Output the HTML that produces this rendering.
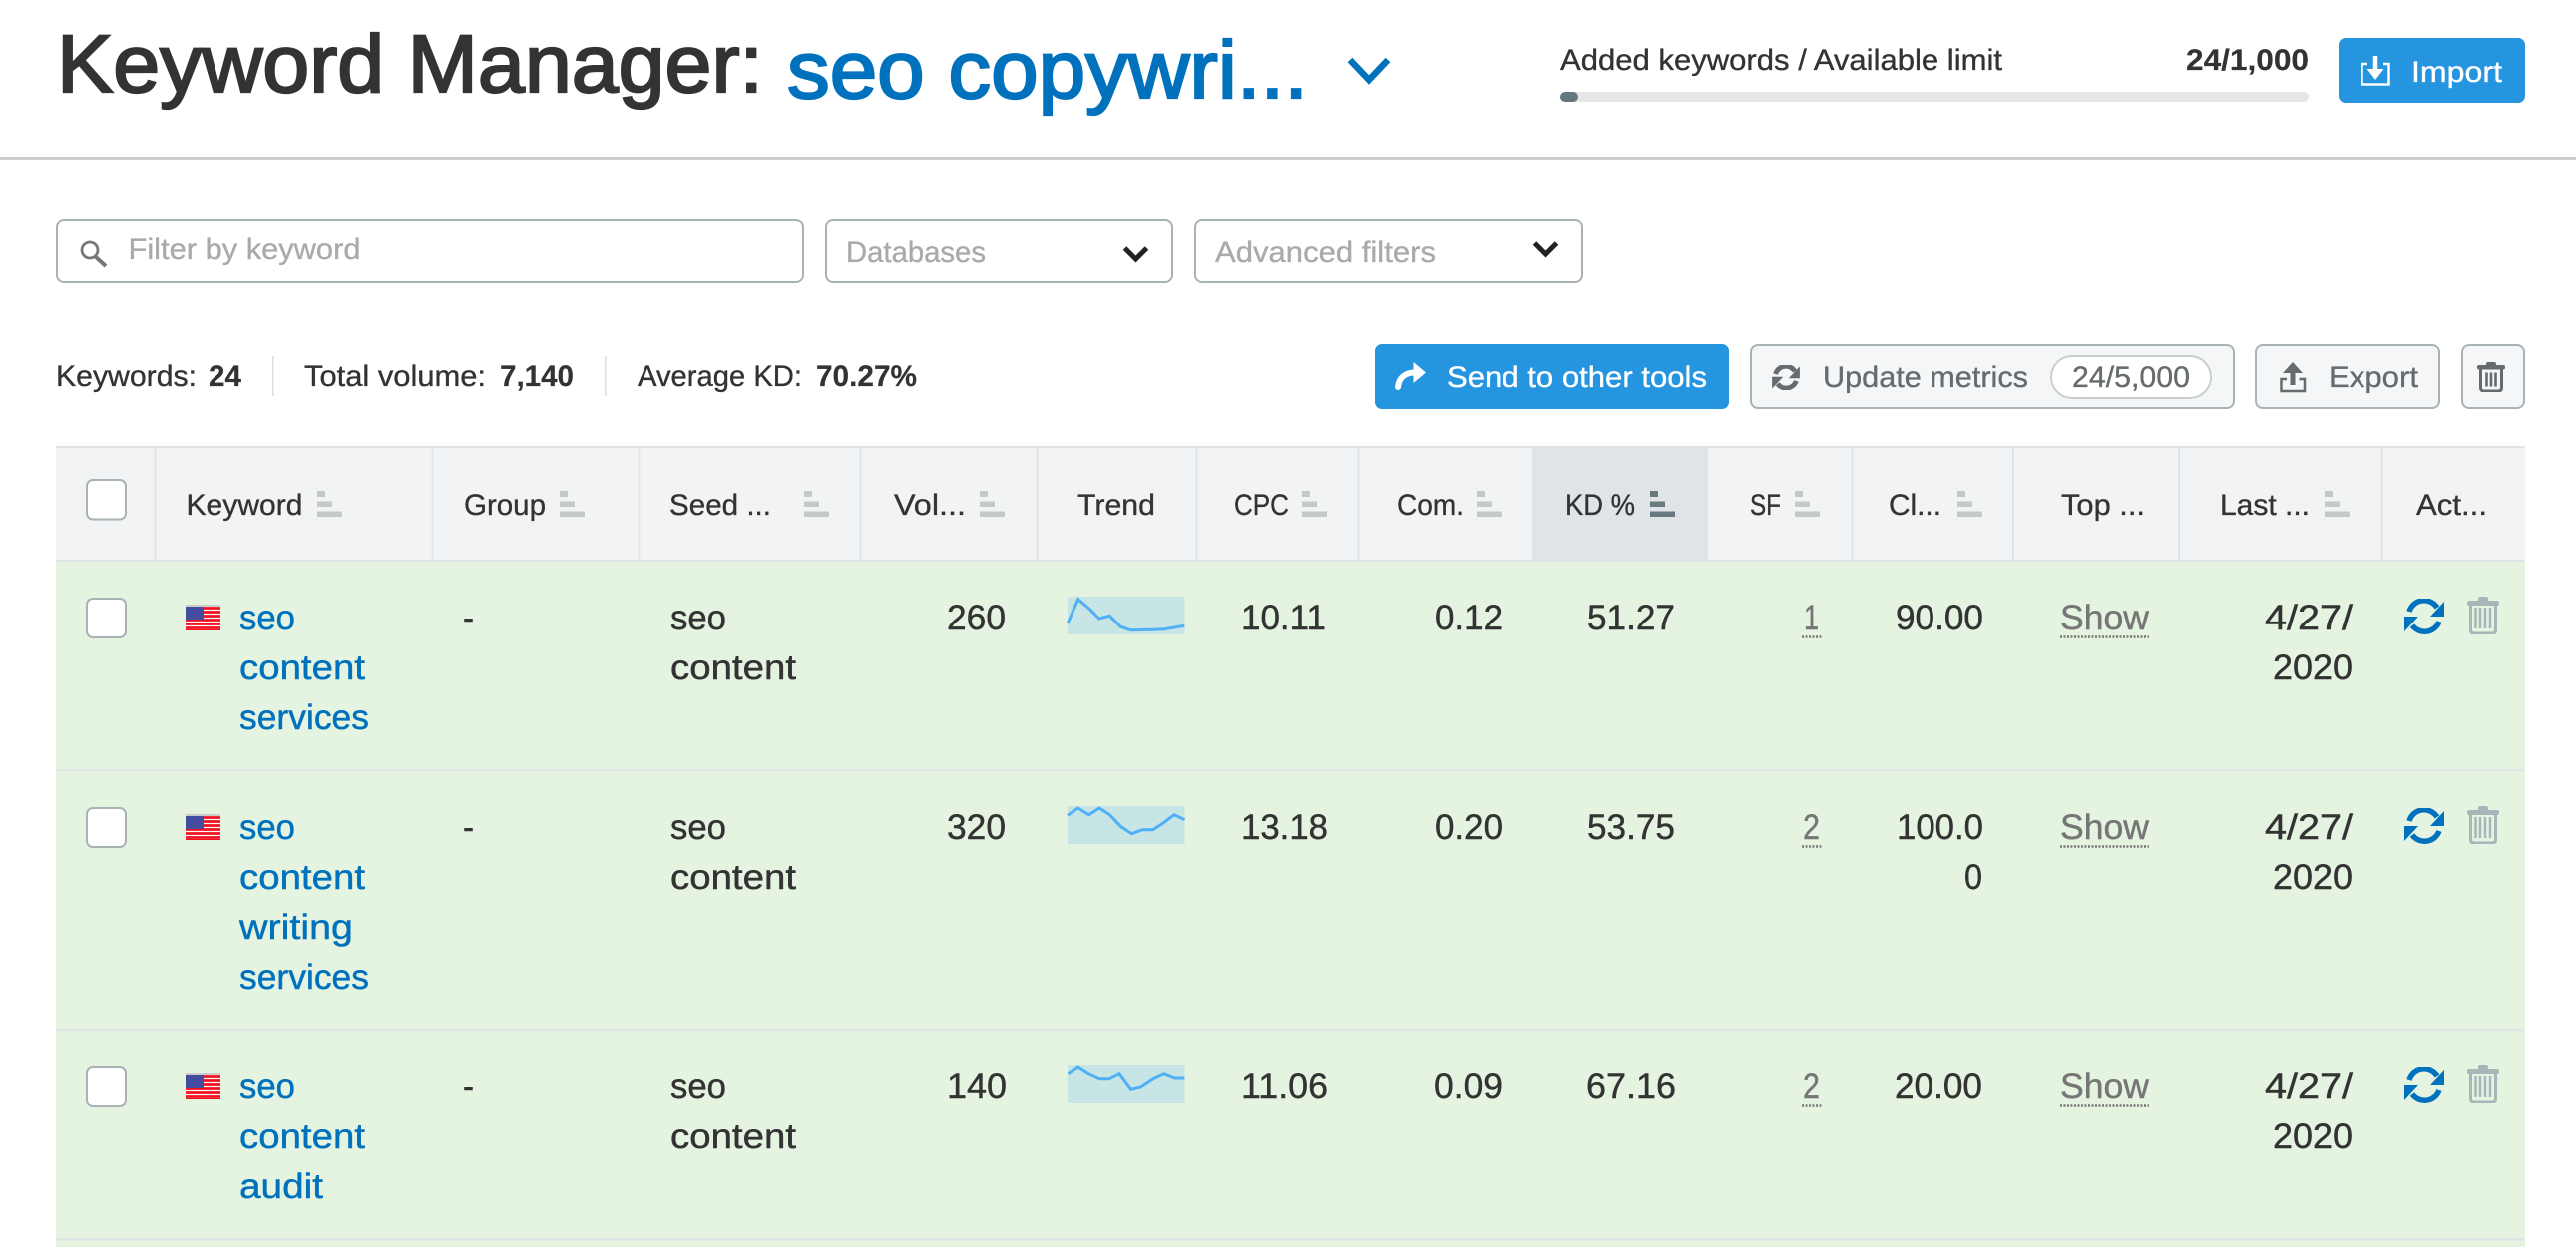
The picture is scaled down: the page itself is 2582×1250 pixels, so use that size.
<!DOCTYPE html>
<html lang="en">
<head>
<meta charset="utf-8">
<title>Keyword Manager</title>
<style>
html,body{margin:0;padding:0;background:#fff;width:2582px;height:1250px;overflow:hidden}
svg{display:block}
text{font-family:"Liberation Sans",Arial,sans-serif;fill:#333;stroke:#333;stroke-width:.45;font-size:35px}
.h{font-size:30px;stroke-width:.35}
.s{font-size:30px;stroke-width:.35}
.b{font-weight:700;stroke-width:.2}
.l{fill:#0071bc;stroke:#0071bc}
.g{fill:#767676;stroke:#767676}
.p{fill:#aaa;stroke:#aaa}
.w{fill:#fff;stroke:#fff}
.d{fill:#666b6d;stroke:#666b6d}
.box{fill:#fff;stroke:#a9b3b5;stroke-width:2}
.btn{fill:#f4f6f7;stroke:#a9b3b5;stroke-width:2}
.cb{fill:#fff;stroke:#a9b3b5;stroke-width:2}
.sep{fill:#e2e5e7}
.sl{fill:none;stroke:#4fb0f5;stroke-width:3}
.dot{stroke:#767676;stroke-width:2.5;stroke-dasharray:2 1.5}
</style>
</head>
<body>
<svg xmlns="http://www.w3.org/2000/svg" width="2582" height="1250" viewBox="0 0 2582 1250">
<defs>
<symbol id="sort" viewBox="0 0 25 26"><rect x="0" y="0" width="8" height="6"/><rect x="0" y="10.500" width="15" height="5.500"/><rect x="0" y="20.500" width="25" height="5.500"/></symbol>
<symbol id="refresh" viewBox="0 0 40 36"><path d="M5 13A15.500 15.500 0 0 1 33 9" fill="none" stroke="currentColor" stroke-width="5.500"/><path d="M35 23A15.500 15.500 0 0 1 8 27" fill="none" stroke="currentColor" stroke-width="5.500"/><path d="M40 3V18H26ZM0 33V18H14Z" fill="currentColor"/></symbol>
<symbol id="refreshb" viewBox="0 0 40 36"><path d="M5 13A15.500 15.500 0 0 1 33 9" fill="none" stroke="currentColor" stroke-width="7"/><path d="M35 23A15.500 15.500 0 0 1 8 27" fill="none" stroke="currentColor" stroke-width="7"/><path d="M40 2V19H24ZM0 34V17H16Z" fill="currentColor"/></symbol>
<symbol id="trash" viewBox="0 0 32 38"><rect x="0" y="4" width="32" height="5" rx="2" fill="currentColor"/><rect x="11" y="0" width="10" height="5" rx="2" fill="currentColor"/><path d="M3.500 8V33.500Q3.500 37 7 37H25Q28.500 37 28.500 33.500V8" fill="none" stroke="currentColor" stroke-width="3"/><path d="M8.500 11V32M13 11V32M18 11V32M23 11V32" stroke="currentColor" stroke-width="2.500"/></symbol>
<symbol id="trashb" viewBox="0 0 28 30"><rect x="0" y="3" width="28" height="4.500" rx="2" fill="currentColor"/><rect x="9" y="0" width="10" height="4" rx="2" fill="currentColor"/><path d="M3.500 7V25.500Q3.500 29 7 29H21Q24.500 29 24.500 25.500V7" fill="none" stroke="currentColor" stroke-width="3"/><path d="M9.500 10.500V24.500M14 10.500V24.500M18.500 10.500V24.500" stroke="currentColor" stroke-width="2.600"/></symbol>
<symbol id="flag" viewBox="0 0 35 26"><rect width="35" height="26" fill="#fff"/><rect width="35" height="2" fill="#ccc"/><path d="M0 3.500H35M0 7.500H35M0 11.500H35M0 15.500H35M0 19.500H35M0 23.500H35" stroke="#f0131f" stroke-width="2.800"/><rect y="25" width="35" height="1" fill="#f0131f"/><rect y="2" width="18" height="13" fill="#444c9e"/></symbol>
</defs>

<!-- Top bar -->
<text x="57" y="92" textLength="708" lengthAdjust="spacingAndGlyphs" style="font-size:82px;stroke:#333;stroke-width:2.200">Keyword Manager:</text>
<text x="789" y="98" textLength="522" lengthAdjust="spacingAndGlyphs" class="l" style="font-size:82px;stroke:#0071bc;stroke-width:2.200">seo copywri...</text>
<path d="M1353 60L1372 80L1391 60" fill="none" stroke="#0071bc" stroke-width="6.500"/>

<text x="1564" y="70" class="s" textLength="443" lengthAdjust="spacingAndGlyphs">Added keywords / Available limit</text>
<text x="2191" y="70" class="s b" textLength="123" lengthAdjust="spacingAndGlyphs">24/1,000</text>
<rect x="1564" y="92" width="750" height="10" rx="5" fill="#e6e6e6"/>
<rect x="1564" y="92" width="18" height="10" rx="5" fill="#64797f"/>
<rect x="2344" y="38" width="187" height="65" rx="7" fill="#2595e0"/>
<path d="M2373 64H2367.500V84.500H2394.500V64H2389" fill="none" stroke="#fff" stroke-width="2.500"/>
<path d="M2381 56V72" stroke="#fff" stroke-width="4.500"/>
<path d="M2372.500 69H2389.500L2381 80Z" fill="#fff"/>
<text x="2417" y="82" class="s w" textLength="91" lengthAdjust="spacingAndGlyphs">Import</text>

<rect x="0" y="157" width="2582" height="3" fill="#ccc"/>

<!-- Filters -->
<rect x="57" y="221" width="748" height="62" rx="7" class="box"/>
<circle cx="90" cy="251" r="8" fill="none" stroke="#777" stroke-width="2.800"/>
<path d="M96 258L106 267" stroke="#777" stroke-width="4"/>
<text x="128.500" y="260" class="s p" textLength="233" lengthAdjust="spacingAndGlyphs">Filter by keyword</text>

<rect x="828" y="221" width="347" height="62" rx="7" class="box"/>
<text x="848" y="263" class="s p" textLength="140" lengthAdjust="spacingAndGlyphs">Databases</text>
<path d="M1127.500 249L1138.500 260L1149.500 249" fill="none" stroke="#222" stroke-width="5"/>

<rect x="1198" y="221" width="388" height="62" rx="7" class="box"/>
<text x="1218" y="263" class="s p" textLength="221" lengthAdjust="spacingAndGlyphs">Advanced filters</text>
<path d="M1538.500 244L1549.500 255L1560.500 244" fill="none" stroke="#222" stroke-width="5"/>

<!-- Stats -->
<text x="56" y="387" class="s" textLength="141" lengthAdjust="spacingAndGlyphs">Keywords:</text>
<text x="209" y="387" class="s b" textLength="33" lengthAdjust="spacingAndGlyphs">24</text>
<rect x="273" y="357" width="1.500" height="40" fill="#dde0e1"/>
<text x="305" y="387" class="s" textLength="182" lengthAdjust="spacingAndGlyphs">Total volume:</text>
<text x="501" y="387" class="s b" textLength="74" lengthAdjust="spacingAndGlyphs">7,140</text>
<rect x="606" y="357" width="1.500" height="40" fill="#dde0e1"/>
<text x="639" y="387" class="s" textLength="165" lengthAdjust="spacingAndGlyphs">Average KD:</text>
<text x="818" y="387" class="s b" textLength="101" lengthAdjust="spacingAndGlyphs">70.27%</text>

<!-- Action buttons -->
<rect x="1378" y="345" width="355" height="65" rx="7" fill="#2595e0"/>
<path d="M1401 388C1402 379 1408 373.500 1418 373.500" fill="none" stroke="#fff" stroke-width="6" stroke-linecap="round"/>
<path d="M1416.500 363L1429 373.500L1416.500 384Z" fill="#fff"/>
<text x="1450" y="388" class="s w" textLength="261" lengthAdjust="spacingAndGlyphs">Send to other tools</text>

<rect x="1755" y="346" width="484" height="63" rx="7" class="btn"/>
<use href="#refreshb" x="1775" y="366" width="30" height="25" style="color:#666b6d"/>
<text x="1827" y="388" class="s d" textLength="206" lengthAdjust="spacingAndGlyphs">Update metrics</text>
<rect x="2056" y="357" width="160" height="42" rx="21" fill="#fff" stroke="#c9cfcf" stroke-width="2"/>
<text x="2077" y="388" class="s d" textLength="118" lengthAdjust="spacingAndGlyphs">24/5,000</text>

<rect x="2261" y="346" width="184" height="63" rx="7" class="btn"/>
<path d="M2292 380H2286.500V392H2310V380H2304.500" fill="none" stroke="#666b6d" stroke-width="2.500"/>
<path d="M2298 372V386" stroke="#666b6d" stroke-width="5"/>
<path d="M2288 374L2298 363L2308 374Z" fill="#666b6d"/>
<text x="2334" y="388" class="s d" textLength="90" lengthAdjust="spacingAndGlyphs">Export</text>

<rect x="2468" y="346" width="62" height="63" rx="7" class="btn"/>
<use href="#trashb" x="2483" y="363" width="28" height="30" style="color:#666b6d"/>

<!-- Table header -->
<rect x="56" y="447" width="2475" height="115" fill="#f1f3f4"/>
<rect x="1536" y="449" width="174" height="112" fill="#e1e4e6"/>
<rect x="56" y="447" width="2475" height="2" fill="#e0e4e5"/>
<g class="sep">
<rect x="154.500" y="449" width="2" height="112"/>
<rect x="432.500" y="449" width="2" height="112"/>
<rect x="639.500" y="449" width="2" height="112"/>
<rect x="861.500" y="449" width="2" height="112"/>
<rect x="1038.500" y="449" width="2" height="112"/>
<rect x="1198.500" y="449" width="2" height="112"/>
<rect x="1360.500" y="449" width="2" height="112"/>
<rect x="1710" y="449" width="2" height="112"/>
<rect x="1855.500" y="449" width="2" height="112"/>
<rect x="2017" y="449" width="2" height="112"/>
<rect x="2183" y="449" width="2" height="112"/>
<rect x="2386.500" y="449" width="2" height="112"/>
</g>
<rect x="56" y="561" width="2475" height="2.500" fill="#dfe4e4"/>

<rect x="87" y="481" width="39" height="39.500" rx="6" class="cb"/>
<text x="186.500" y="516" class="h" textLength="117" lengthAdjust="spacingAndGlyphs">Keyword</text>
<text x="465" y="516" class="h" textLength="82" lengthAdjust="spacingAndGlyphs">Group</text>
<text x="671" y="516" class="h" textLength="102" lengthAdjust="spacingAndGlyphs">Seed ...</text>
<text x="896" y="516" class="h" textLength="72" lengthAdjust="spacingAndGlyphs">Vol...</text>
<text x="1080" y="516" class="h" textLength="78" lengthAdjust="spacingAndGlyphs">Trend</text>
<text x="1237" y="516" class="h" textLength="55" lengthAdjust="spacingAndGlyphs">CPC</text>
<text x="1400" y="516" class="h" textLength="67" lengthAdjust="spacingAndGlyphs">Com.</text>
<text x="1569" y="516" class="h" textLength="70" lengthAdjust="spacingAndGlyphs">KD %</text>
<text x="1754" y="516" class="h" textLength="31" lengthAdjust="spacingAndGlyphs">SF</text>
<text x="1893" y="516" class="h" textLength="53" lengthAdjust="spacingAndGlyphs">Cl...</text>
<text x="2066" y="516" class="h" textLength="84" lengthAdjust="spacingAndGlyphs">Top ...</text>
<text x="2225" y="516" class="h" textLength="90" lengthAdjust="spacingAndGlyphs">Last ...</text>
<text x="2422" y="516" class="h" textLength="71" lengthAdjust="spacingAndGlyphs">Act...</text>

<g fill="#c3cac9">
<use href="#sort" x="318" y="492" width="25" height="26"/>
<use href="#sort" x="561" y="492" width="25" height="26"/>
<use href="#sort" x="806" y="492" width="25" height="26"/>
<use href="#sort" x="982" y="492" width="25" height="26"/>
<use href="#sort" x="1305" y="492" width="25" height="26"/>
<use href="#sort" x="1480" y="492" width="25" height="26"/>
<use href="#sort" x="1799" y="492" width="25" height="26"/>
<use href="#sort" x="1962" y="492" width="25" height="26"/>
<use href="#sort" x="2330" y="492" width="25" height="26"/>
</g>
<use href="#sort" x="1654" y="492" width="25" height="26" fill="#68797f"/>

<!-- Rows background -->
<rect x="56" y="563" width="2475" height="687" fill="#e5f3e1"/>
<rect x="56" y="771" width="2475" height="2.500" fill="#dfe6e4"/>
<rect x="56" y="1031" width="2475" height="2.500" fill="#dfe6e4"/>
<rect x="56" y="1241" width="2475" height="2.500" fill="#dfe6e4"/>

<!-- Row 1 -->
<rect x="87" y="600" width="39" height="39" rx="6" class="cb"/>
<use href="#flag" x="186" y="606" width="35" height="26"/>
<text x="240" y="631" class="l" textLength="56" lengthAdjust="spacingAndGlyphs">seo</text>
<text x="240" y="681" class="l" textLength="126" lengthAdjust="spacingAndGlyphs">content</text>
<text x="240" y="731" class="l" textLength="130" lengthAdjust="spacingAndGlyphs">services</text>
<text x="464" y="631" textLength="11" lengthAdjust="spacingAndGlyphs">-</text>
<text x="672" y="631" textLength="56" lengthAdjust="spacingAndGlyphs">seo</text>
<text x="672" y="681" textLength="126" lengthAdjust="spacingAndGlyphs">content</text>
<text x="949" y="631" textLength="59" lengthAdjust="spacingAndGlyphs">260</text>
<rect x="1070" y="598" width="117.500" height="38" fill="#c7e5e5"/>
<polyline class="sl" points="1070,625 1080.700,600.700 1091.700,610 1101.700,620 1112.300,617.300 1123.300,628.300 1133.300,631.700 1155,631.300 1166.700,630.700 1187.300,627.300"/>
<text x="1244" y="631" textLength="85" lengthAdjust="spacingAndGlyphs">10.11</text>
<text x="1438" y="631" textLength="68" lengthAdjust="spacingAndGlyphs">0.12</text>
<text x="1591" y="631" textLength="88" lengthAdjust="spacingAndGlyphs">51.27</text>
<text x="1808" y="631" class="g" textLength="15" lengthAdjust="spacingAndGlyphs">1</text>
<line x1="1806" y1="638.500" x2="1827" y2="638.500" class="dot"/>
<text x="1900" y="631" textLength="88" lengthAdjust="spacingAndGlyphs">90.00</text>
<text x="2065" y="631" class="g" textLength="89" lengthAdjust="spacingAndGlyphs">Show</text>
<line x1="2065" y1="638.500" x2="2154" y2="638.500" class="dot"/>
<text x="2270" y="631" textLength="88" lengthAdjust="spacingAndGlyphs">4/27/</text>
<text x="2278" y="681" textLength="80" lengthAdjust="spacingAndGlyphs">2020</text>
<use href="#refresh" x="2410" y="600" width="40" height="36" style="color:#0071bc"/>
<use href="#trash" x="2473" y="598" width="32" height="38" style="color:#a9b5b8"/>

<!-- Row 2 -->
<rect x="87" y="810" width="39" height="39" rx="6" class="cb"/>
<use href="#flag" x="186" y="816" width="35" height="26"/>
<text x="240" y="841" class="l" textLength="56" lengthAdjust="spacingAndGlyphs">seo</text>
<text x="240" y="891" class="l" textLength="126" lengthAdjust="spacingAndGlyphs">content</text>
<text x="240" y="941" class="l" textLength="114" lengthAdjust="spacingAndGlyphs">writing</text>
<text x="240" y="991" class="l" textLength="130" lengthAdjust="spacingAndGlyphs">services</text>
<text x="464" y="841" textLength="11" lengthAdjust="spacingAndGlyphs">-</text>
<text x="672" y="841" textLength="56" lengthAdjust="spacingAndGlyphs">seo</text>
<text x="672" y="891" textLength="126" lengthAdjust="spacingAndGlyphs">content</text>
<text x="949" y="841" textLength="59" lengthAdjust="spacingAndGlyphs">320</text>
<rect x="1070" y="808" width="117.500" height="38" fill="#c7e5e5"/>
<polyline class="sl" points="1070,817.300 1080.500,810 1091.500,816.700 1102,810 1112.300,816.700 1123.300,828.300 1134.300,835.700 1145.200,831.700 1155.700,831.700 1166,825 1177,816.700 1187.500,821.700"/>
<text x="1244" y="841" textLength="87" lengthAdjust="spacingAndGlyphs">13.18</text>
<text x="1438" y="841" textLength="68" lengthAdjust="spacingAndGlyphs">0.20</text>
<text x="1591" y="841" textLength="88" lengthAdjust="spacingAndGlyphs">53.75</text>
<text x="1807" y="841" class="g" textLength="17" lengthAdjust="spacingAndGlyphs">2</text>
<line x1="1806" y1="848.500" x2="1827" y2="848.500" class="dot"/>
<text x="1901" y="841" textLength="87" lengthAdjust="spacingAndGlyphs">100.0</text>
<text x="1969" y="891" textLength="18" lengthAdjust="spacingAndGlyphs">0</text>
<text x="2065" y="841" class="g" textLength="89" lengthAdjust="spacingAndGlyphs">Show</text>
<line x1="2065" y1="848.500" x2="2154" y2="848.500" class="dot"/>
<text x="2270" y="841" textLength="88" lengthAdjust="spacingAndGlyphs">4/27/</text>
<text x="2278" y="891" textLength="80" lengthAdjust="spacingAndGlyphs">2020</text>
<use href="#refresh" x="2410" y="810" width="40" height="36" style="color:#0071bc"/>
<use href="#trash" x="2473" y="808" width="32" height="38" style="color:#a9b5b8"/>

<!-- Row 3 -->
<rect x="87" y="1070" width="39" height="39" rx="6" class="cb"/>
<use href="#flag" x="186" y="1076" width="35" height="26"/>
<text x="240" y="1101" class="l" textLength="56" lengthAdjust="spacingAndGlyphs">seo</text>
<text x="240" y="1151" class="l" textLength="126" lengthAdjust="spacingAndGlyphs">content</text>
<text x="240" y="1201" class="l" textLength="84" lengthAdjust="spacingAndGlyphs">audit</text>
<text x="464" y="1101" textLength="11" lengthAdjust="spacingAndGlyphs">-</text>
<text x="672" y="1101" textLength="56" lengthAdjust="spacingAndGlyphs">seo</text>
<text x="672" y="1151" textLength="126" lengthAdjust="spacingAndGlyphs">content</text>
<text x="949" y="1101" textLength="60" lengthAdjust="spacingAndGlyphs">140</text>
<rect x="1070" y="1068" width="117.500" height="38" fill="#c7e5e5"/>
<polyline class="sl" points="1070.500,1076.700 1080.500,1070 1091,1076.700 1102,1081.700 1112,1081.700 1122,1076.700 1133.500,1092.300 1143.500,1090 1156,1081.700 1166.700,1076.700 1177.500,1081 1187.500,1081"/>
<text x="1244" y="1101" textLength="87" lengthAdjust="spacingAndGlyphs">11.06</text>
<text x="1437" y="1101" textLength="69" lengthAdjust="spacingAndGlyphs">0.09</text>
<text x="1590" y="1101" textLength="90" lengthAdjust="spacingAndGlyphs">67.16</text>
<text x="1807" y="1101" class="g" textLength="17" lengthAdjust="spacingAndGlyphs">2</text>
<line x1="1806" y1="1108.500" x2="1827" y2="1108.500" class="dot"/>
<text x="1899" y="1101" textLength="88" lengthAdjust="spacingAndGlyphs">20.00</text>
<text x="2065" y="1101" class="g" textLength="89" lengthAdjust="spacingAndGlyphs">Show</text>
<line x1="2065" y1="1108.500" x2="2154" y2="1108.500" class="dot"/>
<text x="2270" y="1101" textLength="88" lengthAdjust="spacingAndGlyphs">4/27/</text>
<text x="2278" y="1151" textLength="80" lengthAdjust="spacingAndGlyphs">2020</text>
<use href="#refresh" x="2410" y="1070" width="40" height="36" style="color:#0071bc"/>
<use href="#trash" x="2473" y="1068" width="32" height="38" style="color:#a9b5b8"/>
</svg>
</body>
</html>
